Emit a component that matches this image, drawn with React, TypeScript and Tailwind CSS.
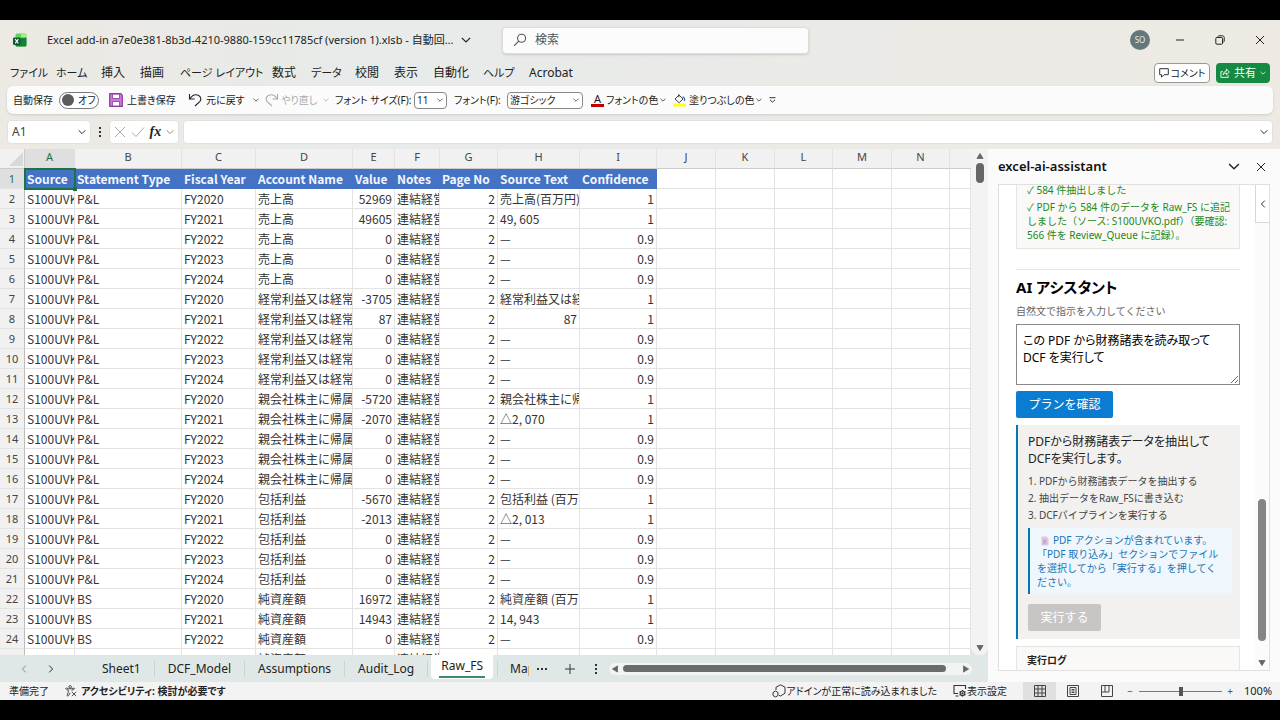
import React, { useState } from 'react';
import { clsx } from 'clsx';

type IconProps = { className?: string };

const ChevronDown: React.FC<IconProps> = ({ className }) => (
    <svg viewBox="0 0 10 6" fill="none" stroke="currentColor" strokeWidth="1.2" className={clsx('shrink-0', className)}>
        <path d="M0.8 0.8 5 5 9.2 0.8" />
    </svg>
);

const ExcelIcon: React.FC = () => (
    <svg viewBox="0 0 14 14" className="h-3.5 w-3.5 shrink-0">
        <rect x="2.5" y="0.5" width="11" height="13" rx="1.5" fill="#5fd35a" />
        <path d="M8 .5h4a1.5 1.5 0 0 1 1.5 1.5v2.800H8z" fill="#a5ee7b" />
        <path d="M8 4.800h5.500V12a1.500 1.500 0 0 1-1.500 1.500H4A1.500 1.500 0 0 1 2.500 12V9z" fill="#15803a" />
        <rect x="0" y="4.500" width="7.500" height="7.500" rx="1.200" fill="#0d5c2c" />
        <path d="m2.200 6.200 3.200 4.200M5.400 6.200l-3.200 4.200" stroke="#fff" strokeWidth="1.100" />
    </svg>
);

const SearchIcon: React.FC = () => (
    <svg viewBox="0 0 14 14" fill="none" stroke="#555" strokeWidth="1.1" className="h-3.5 w-3.5 shrink-0">
        <circle cx="8.6" cy="5.200" r="4" />
        <path d="M5.700 8.100 1 12.800" />
    </svg>
);

const SaveIcon: React.FC = () => (
    <svg viewBox="0 0 14 14" className="h-3.5 w-3.5 shrink-0">
        <path d="M.7.700h11.100l1.500 1.500v11.100H.7z" fill="#c77bd4" stroke="#8f3aa3" strokeWidth="1.200" />
        <path d="M3.500 1.200h7v4.300h-7z" fill="#fff" stroke="#8f3aa3" strokeWidth=".8" />
        <path d="M3.500 13V8.500h7V13z" fill="#fff" stroke="#8f3aa3" strokeWidth=".8" />
    </svg>
);

const UndoIcon: React.FC<IconProps> = ({ className }) => (
    <svg viewBox="0 0 14 14" fill="none" stroke="currentColor" strokeWidth="1.1" className={clsx('h-3.5 w-3.5 shrink-0', className)}>
        <path d="M1.500 1v5h5M1.700 5.800C4 2.500 7.500 1 10.300 2.300c3 1.500 3.200 4.500 1.200 6.500L7 13" />
    </svg>
);

const BucketIcon: React.FC = () => (
    <svg viewBox="0 0 14 14" fill="none" className="h-3.5 w-3.5 shrink-0">
        <rect x="0" y="10.500" width="13" height="3" fill="#ffff1a" />
        <path d="M5.800 1.200v3M2 6l4-4 4 4-3.800 3.800z" stroke="#444" strokeWidth="1" />
        <path d="M9.500 3.800c1.800.2 2.300 1.700 2 4.200" stroke="#2f6fb5" strokeWidth="1.300" />
    </svg>
);

const AccessibilityIcon: React.FC = () => (
    <svg viewBox="0 0 14 14" fill="none" stroke="#333" strokeWidth="1" className="h-3 w-3 shrink-0">
        <circle cx="6" cy="2.200" r="1.500" />
        <path d="M1 3.500c-.5 1 .2 1.400 1 1.700l1.800.6v2.500L2.500 12c0 1 1.300 1.300 1.700.3L6 9M11 3.500c.5 1-.2 1.400-1 1.700l-1.800.6v1M1.500 3.300 4 4.400h4l2.500-1.100M8 8l5 5M13 8l-5 5" />
    </svg>
);

const AddinIcon: React.FC = () => (
    <svg viewBox="0 0 14 14" fill="none" stroke="#333" strokeWidth="1" className="h-3.5 w-3.5 shrink-0">
        <path d="M4 6V3.200L8.500.8 13 3.200v6L8.500 12 7 11.300" />
        <path d="M1 8.500 3.500 7 6 8.500v3L3.500 13 1 11.500z" />
    </svg>
);

const DisplayIcon: React.FC = () => (
    <svg viewBox="0 0 14 14" fill="none" stroke="#333" strokeWidth="1.1" className="h-3.5 w-3.5 shrink-0">
        <path d="M5 9.500H1v-8h11.500V5M2.500 12h3" />
        <circle cx="9.500" cy="9.300" r="2.300" />
        <circle cx="9.500" cy="9.300" r=".6" />
        <path d="M9.500 6v1M9.500 11.600v1M6.500 7.700l.9.5M11.600 10.400l.9.500M6.500 10.900l.9-.5M11.600 8.200l.9-.5" />
    </svg>
);

const Triangle: React.FC<IconProps> = ({ className }) => (
    <svg viewBox="0 0 8 7" className={clsx('h-1.5 w-2 shrink-0', className)}>
        <path d="M4 .5 7.600 6.500H.4z" fill="#666" stroke="#666" strokeLinejoin="round" />
    </svg>
);

const menus = [
    { name: 'ファイル', className: 'w-[46px] text-[11px]' },
    { name: 'ホーム', className: 'w-[45px] text-[11px]' },
    { name: '挿入', className: 'w-[39px]' },
    { name: '描画', className: 'w-[40px]' },
    { name: 'ページ レイアウト', className: 'w-[92px] text-[11px]' },
    { name: '数式', className: 'w-[39px]' },
    { name: 'データ', className: 'w-[44px] text-[11px]' },
    { name: '校閲', className: 'w-[39px]' },
    { name: '表示', className: 'w-[39px]' },
    { name: '自動化', className: 'w-[50px]' },
    { name: 'ヘルプ', className: 'w-[46px] text-[11px]' },
    { name: 'Acrobat', className: 'w-[60px]' },
];

const columns = [
    { name: 'A', width: 'w-[50px]' },
    { name: 'B', width: 'w-[107px]' },
    { name: 'C', width: 'w-[74px]' },
    { name: 'D', width: 'w-[97px]' },
    { name: 'E', width: 'w-[42px]' },
    { name: 'F', width: 'w-[45px]' },
    { name: 'G', width: 'w-[58px]' },
    { name: 'H', width: 'w-[82px]' },
    { name: 'I', width: 'w-[77px]' },
    { name: 'J', width: 'w-[59px]' },
    { name: 'K', width: 'w-[59px]' },
    { name: 'L', width: 'w-[58px]' },
    { name: 'M', width: 'w-[59px]' },
    { name: 'N', width: 'w-[58px]' },
];

const headers = ['Source', 'Statement Type', 'Fiscal Year', 'Account Name', 'Value', 'Notes', 'Page No', 'Source Text', 'Confidence'];

const groups = [
    { type: 'P&L', account: '売上高', values: [52969, 49605, 0, 0, 0], texts: ['売上高(百万円)', '49, 605'] },
    { type: 'P&L', account: '経常利益又は経常', values: [-3705, 87, 0, 0, 0], texts: ['経常利益又は経', '87'] },
    { type: 'P&L', account: '親会社株主に帰属', values: [-5720, -2070, 0, 0, 0], texts: ['親会社株主に帰', '△2, 070'] },
    { type: 'P&L', account: '包括利益', values: [-5670, -2013, 0, 0, 0], texts: ['包括利益 (百万', '△2, 013'] },
    { type: 'BS', account: '純資産額', values: [16972, 14943, 0, 0], texts: ['純資産額 (百万', '14, 943'] },
];

const rows = groups.flatMap((g) =>
    g.values.map((value, i) => ({
        type: g.type,
        year: `FY${2020 + i}`,
        account: g.account,
        value,
        text: g.texts[i] ?? '—',
        confidence: value === 0 ? '0.9' : '1',
    }))
);

const sheets = ['Sheet1', 'DCF_Model', 'Assumptions', 'Audit_Log'];

const TitleBar: React.FC = () => (
    <header className="flex h-10 shrink-0 items-center">
        <div className="flex w-[502px] shrink-0 items-center pl-[13px]">
            <ExcelIcon />
            <span className="ml-5 whitespace-nowrap text-[11px]">
                Excel add-in a7e0e381-8b3d-4210-9880-159cc11785cf (version 1).xlsb - 自動回…
            </span>
            <button aria-label="ファイル情報" className="ml-2"><ChevronDown className="h-1.5 w-2.5" /></button>
        </div>
        <label className="flex h-[27px] w-[307px] items-center gap-2 rounded border border-[#dcdcdc] bg-[#fcfcfc] px-2.5 shadow-sm">
            <SearchIcon />
            <input type="text" placeholder="検索" aria-label="検索" className="min-w-0 flex-1 bg-transparent text-[12px] outline-none placeholder:text-[#555]" />
        </label>
        <div className="ml-auto flex items-center pr-[15px]">
            <button className="mr-[25px] h-5 w-5 rounded-full bg-[#64777a] text-[8px] text-[#e8eeee]">SO</button>
            <button aria-label="最小化" className="mr-[30px]">
                <svg viewBox="0 0 10 10" className="h-2.5 w-2.5"><path d="M1 5h8" stroke="#222" /></svg>
            </button>
            <button aria-label="元に戻す" className="mr-[30px]">
                <svg viewBox="0 0 10 10" fill="none" stroke="#222" className="h-2.5 w-2.5">
                    <rect x="0.800" y="2.500" width="6.700" height="6.700" rx="1" />
                    <path d="M2.800 1.500C3 1 3.500.8 4 .8h3.500C8.500.8 9.200 1.500 9.200 2.500V6c0 .600-.2 1-.7 1.200" />
                </svg>
            </button>
            <button aria-label="閉じる">
                <svg viewBox="0 0 10 10" stroke="#222" className="h-2.5 w-2.5"><path d="m1 1 8 8M9 1 1 9" /></svg>
            </button>
        </div>
    </header>
);

const MenuBar: React.FC = () => (
    <nav className="flex h-[26px] shrink-0 items-center px-2.5 text-[12px]">
        {menus.map((menu) => (
            <button key={menu.name} className={clsx('shrink-0 whitespace-nowrap text-left', menu.className)}>
                {menu.name}
            </button>
        ))}
        <div className="ml-auto flex gap-1.5">
            <button className="flex h-5 w-14 items-center justify-center gap-0.5 rounded border border-[#999] bg-white text-[10px] whitespace-nowrap">
                <svg viewBox="0 0 10 10" fill="none" stroke="#333" className="h-2.5 w-2.5 shrink-0"><path d="M.7.700h8.600v6H5L2.500 9.200V6.700H.7z" /></svg>
                コメント
            </button>
            <button className="flex h-5 w-[54px] items-center justify-center gap-1 rounded bg-[#158a43] text-[11px] text-white">
                <svg viewBox="0 0 11 11" fill="none" stroke="currentColor" className="h-2.5 w-2.5 shrink-0">
                    <path d="M3 4H1v6.300h8V8M3.500 7.500c.2-2.500 1.500-3.800 3.500-4V1.200l3.300 3.200L7 7.500V5.400C5.300 5.500 4.300 6.300 3.500 7.500z" />
                </svg>
                共有
                <ChevronDown className="h-1 w-1.5" />
            </button>
        </div>
    </nav>
);

const Toolbar: React.FC = () => {
    const [autoSave, setAutoSave] = useState(false);

    return (
        <div className="mx-[7px] flex h-7 shrink-0 items-center rounded-md bg-[#fbfbfb] pl-1.5 text-[10px] whitespace-nowrap shadow">
            <label className="flex w-24 shrink-0 items-center gap-1.5">
                自動保存
                <input type="checkbox" checked={autoSave} onChange={(e) => setAutoSave(e.target.checked)} className="sr-only" />
                <span className="flex h-[17px] w-10 items-center gap-1 rounded-full border border-[#777] bg-white px-0.5">
                    <span className="h-3 w-3 rounded-full bg-[#5c5c5c]" />
                    {autoSave ? 'オン' : 'オフ'}
                </span>
            </label>
            <button className="flex w-[79px] shrink-0 items-center gap-1"><SaveIcon />上書き保存</button>
            <button className="flex w-[77px] shrink-0 items-center gap-1">
                <UndoIcon />元に戻す<ChevronDown className="ml-1 h-1 w-1.5" />
            </button>
            <button disabled className="flex w-[70px] shrink-0 items-center gap-0.5 text-[#aaa]">
                <UndoIcon className="-scale-x-100" />やり直し<ChevronDown className="ml-1 h-1 w-1.5" />
            </button>
            <div className="flex w-[119px] shrink-0 items-center justify-between pr-[7px]">
                <label htmlFor="font-size">フォント サイズ(F):</label>
                <div className="relative flex items-center">
                    <select id="font-size" className="h-[17px] w-[33px] appearance-none rounded-sm border border-[#888] bg-white pl-0.5 text-[10px]">
                        <option>11</option>
                    </select>
                    <ChevronDown className="pointer-events-none absolute right-1 h-1 w-1.5" />
                </div>
            </div>
            <div className="flex w-[137px] shrink-0 items-center justify-between pr-2">
                <label htmlFor="font-name">フォント(F):</label>
                <div className="relative flex items-center">
                    <select id="font-name" className="h-[17px] w-[76px] appearance-none rounded-sm border border-[#888] bg-white pl-0.5 text-[10px]">
                        <option>游ゴシック</option>
                    </select>
                    <ChevronDown className="pointer-events-none absolute right-1 h-1 w-1.5" />
                </div>
            </div>
            <button className="flex w-[82px] shrink-0 items-center gap-0.5">
                <span className="w-[13px] border-b-3 border-[#c00000] text-[11px] leading-[11px]">A</span>
                フォントの色<ChevronDown className="h-1 w-1.5" />
            </button>
            <button className="flex w-24 shrink-0 items-center gap-0.5">
                <BucketIcon />塗りつぶしの色<ChevronDown className="h-1 w-1.5" />
            </button>
            <button aria-label="その他">
                <svg viewBox="0 0 7 6" fill="none" stroke="#333" className="h-1.5 w-[7px]"><path d="M.5.700h6M1 2.800l2.500 2.400L6 2.800" /></svg>
            </button>
        </div>
    );
};

const FormulaBar: React.FC = () => (
    <div className="mx-[7px] mt-1.5 mb-[5px] flex h-6 shrink-0 items-stretch">
        <div className="flex w-[84px] items-center rounded border border-[#e2e2e2] bg-white pr-1 pl-1">
            <input aria-label="名前ボックス" defaultValue="A1" className="min-w-0 flex-1 text-[12px] text-[#444] outline-none" />
            <ChevronDown className="h-1.5 w-2" />
        </div>
        <div className="flex w-[18px] flex-col items-center justify-center gap-0.5">
            <i className="h-0.5 w-0.5 bg-[#333]" /><i className="h-0.5 w-0.5 bg-[#333]" /><i className="h-0.5 w-0.5 bg-[#333]" />
        </div>
        <div className="flex w-[70px] items-center justify-between rounded border border-[#e2e2e2] bg-white px-1">
            <button aria-label="キャンセル"><svg viewBox="0 0 12 12" stroke="#aaa" className="h-3 w-3"><path d="m1 1 10 10M11 1 1 11" /></svg></button>
            <button aria-label="入力"><svg viewBox="0 0 14 12" fill="none" stroke="#aaa" className="h-3 w-3.5"><path d="m1 6.500 4 4L13 1.500" /></svg></button>
            <button className="font-['Liberation_Serif',serif] text-[14px] leading-4 font-bold italic">fx</button>
            <ChevronDown className="h-1.5 w-2 text-[#888]" />
        </div>
        <div className="ml-1 flex flex-1 items-center rounded border border-[#e2e2e2] bg-white pr-1">
            <input aria-label="数式バー" className="min-w-0 flex-1 px-2 text-[12px] outline-none" />
            <ChevronDown className="h-1.5 w-2" />
        </div>
    </div>
);

const cell = 'h-5 overflow-hidden border-r border-b border-[#e3e3e3] p-0 px-0.5 text-left text-clip';

const Sheet: React.FC = () => (
    <div className="min-w-0 flex-1 overflow-hidden bg-white">
        <table className="w-full table-fixed border-separate border-spacing-0 font-['Noto_Sans_CJK_JP',sans-serif] text-[12px] leading-[19px] whitespace-nowrap text-[#333] [font-feature-settings:normal]">
            <colgroup>
                <col className="w-[25px]" />
                {columns.map((c) => <col key={c.name} className={c.width} />)}
                <col />
            </colgroup>
            <thead>
                <tr className="bg-[#f1f1f1] font-['Noto_Sans',sans-serif] text-[11px] leading-[14px] text-[#444]">
                    <th aria-label="すべて選択" className="h-5 border-r border-b border-[#ccc] p-0">
                        <svg viewBox="0 0 14 14" className="ml-auto h-3.5 w-4"><path d="M14 0v14H0z" fill="#d9d9d9" /></svg>
                    </th>
                    {columns.map((c) => (
                        <th
                            key={c.name}
                            scope="col"
                            className={clsx(
                                'h-5 border-r border-b p-0 pb-1 font-normal',
                                c.name === 'A' ? 'border-r-[#ddd] border-b-[#1a7340] bg-[#dfdfdf] text-[#1a7340]' : 'border-r-[#e3e3e3] border-b-[#ccc]'
                            )}
                        >
                            {c.name}
                        </th>
                    ))}
                    <th className="border-b border-[#ccc]" />
                </tr>
            </thead>
            <tbody>
                <tr>
                    <RowNumber n={1} />
                    {headers.map((h, i) => (
                        <th
                            key={h}
                            scope="col"
                            className={clsx(
                                'h-5 bg-[#4472c4] p-0 px-0.5 text-left leading-4 font-bold text-[#f2f6ff]',
                                i === 0 && 'relative outline-2 -outline-offset-1 outline-[#1a7340]'
                            )}
                        >
                            {h}
                            {i === 0 && <span className="absolute -right-0.5 -bottom-0.5 h-1 w-1 bg-[#1a7340]" />}
                        </th>
                    ))}
                    <EmptyCells />
                </tr>
                {rows.map((row, i) => (
                    <tr key={i}>
                        <RowNumber n={i + 2} />
                        <td className={cell}>S100UVK</td>
                        <td className={cell}>{row.type}</td>
                        <td className={cell}>{row.year}</td>
                        <td className={cell}>{row.account}</td>
                        <td className={clsx(cell, 'text-right')}>{row.value}</td>
                        <td className={cell}>連結経営</td>
                        <td className={clsx(cell, 'text-right')}>2</td>
                        <td className={clsx(cell, row.text === '87' && 'text-right')}>{row.text}</td>
                        <td className={clsx(cell, 'text-right')}>{row.confidence}</td>
                        <EmptyCells />
                    </tr>
                ))}
            </tbody>
        </table>
    </div>
);

const RowNumber: React.FC<{ n: number }> = ({ n }) => (
    <th
        scope="row"
        className={clsx(
            "h-5 border-r border-b border-r-[#bbb] border-b-[#e3e3e3] p-0 text-center font-['Noto_Sans',sans-serif] text-[11px] leading-4 font-normal",
            n === 1 ? 'bg-[#dfdfdf] text-[#1a7340]' : 'bg-[#f1f1f1] text-[#444]'
        )}
    >
        {n}
    </th>
);

const EmptyCells: React.FC = () => (
    <>
        {['J', 'K', 'L', 'M', 'N', 'O'].map((c) => <td key={c} className={cell} />)}
    </>
);

const SheetTabs: React.FC = () => (
    <div className="flex h-[27px] shrink-0 items-center text-[12px]">
        <div className="flex w-[89px] shrink-0 gap-[19px] pl-5">
            <button aria-label="前のシート"><ChevronDown className="h-1.5 w-2 rotate-90 text-[#888]" /></button>
            <button aria-label="次のシート"><ChevronDown className="h-1.5 w-2 -rotate-90" /></button>
        </div>
        {sheets.map((s) => (
            <button key={s} className="h-4 shrink-0 border-r border-[#ccd4d3] px-[13px] leading-4">{s}</button>
        ))}
        <button className="ml-[3px] h-6 shrink-0 self-start rounded-b bg-white px-2">
            <span className="block border-b-2 border-[#3f8a6c] px-0.5 leading-5">Raw_FS</span>
        </button>
        <button className="ml-1 h-4 w-8 shrink-0 overflow-hidden border-l border-[#ccd4d3] pl-3 text-left leading-4">Map</button>
        <button aria-label="その他のシート" className="ml-1.5 flex shrink-0 gap-0.5 p-0.5">
            <i className="h-0.5 w-0.5 bg-[#333]" /><i className="h-0.5 w-0.5 bg-[#333]" /><i className="h-0.5 w-0.5 bg-[#333]" />
        </button>
        <button aria-label="シートの追加" className="ml-4 shrink-0">
            <svg viewBox="0 0 10 10" stroke="#333" className="h-2.5 w-2.5"><path d="M5 0v10M0 5h10" /></svg>
        </button>
        <div className="ml-5 flex shrink-0 flex-col gap-0.5">
            <i className="h-0.5 w-0.5 bg-[#333]" /><i className="h-0.5 w-0.5 bg-[#333]" /><i className="h-0.5 w-0.5 bg-[#333]" />
        </div>
        <div className="ml-3 flex h-3 flex-1 items-center gap-1 rounded-full bg-[#f1f4f3] pl-0.5">
            <Triangle className="-rotate-90" />
            <div className="h-[7px] flex-1 rounded-full bg-[#6b6b6b]" />
            <Triangle className="mr-0.5 ml-3 rotate-90" />
        </div>
        <div className="w-4 shrink-0" />
    </div>
);

const AssistantPane: React.FC = () => {
    const [prompt, setPrompt] = useState('この PDF から財務諸表を読み取って\nDCF を実行して');

    return (
        <aside className="flex w-[292px] shrink-0 flex-col bg-[#fbfbfb] pr-2.5 pb-[11px] pl-2.5">
            <div className="flex h-[35px] shrink-0 items-center pr-1">
                <h2 className="flex-1 text-[13px] font-semibold text-[#111]">excel-ai-assistant</h2>
                <button aria-label="オプション"><ChevronDown className="h-[7px] w-3" /></button>
                <button aria-label="閉じる" className="ml-4">
                    <svg viewBox="0 0 10 10" stroke="#222" className="h-2.5 w-2.5"><path d="m1 1 8 8M9 1 1 9" /></svg>
                </button>
            </div>
            <div className="relative flex min-h-0 flex-1 overflow-hidden border border-[#e0e0e0] bg-white pl-[17px]">
                <div className="flex w-56 shrink-0 flex-col items-start text-[10px] leading-[14px] whitespace-nowrap [font-feature-settings:normal] *:shrink-0">
                    <div className="w-full border border-t-0 border-[#e6e4e1] bg-[#faf9f8] px-2.5 pb-1.5 text-[#1b8a1b]">
                        <p className="-mt-0.5">✓ 584 件抽出しました</p>
                        <p className="mt-[3px]">
                            ✓ PDF から 584 件のデータを Raw_FS に追記<br />
                            しました（ソース: S100UVKO.pdf）（要確認:<br />
                            566 件を Review_Queue に記録）。
                        </p>
                    </div>
                    <hr className="mt-5 w-full border-[#e6e6e6]" />
                    <h3 className="mt-[7px] text-[15px] leading-5 font-bold text-black [font-feature-settings:'palt']">AI アシスタント</h3>
                    <label htmlFor="prompt" className="mt-[7px] text-[#666]">自然文で指示を入力してください</label>
                    <textarea
                        id="prompt"
                        value={prompt}
                        onChange={(e) => setPrompt(e.target.value)}
                        className="mt-1.5 block h-[61px] w-full border border-[#8a8886] bg-white px-1.5 py-[7px] text-[12px] leading-[17px] text-black [font-feature-settings:'palt']"
                    />
                    <button className="mt-1.5 h-[27px] w-[97px] rounded-xs bg-[#0a7cd2] text-[12px] text-white">プランを確認</button>
                    <section className="mt-[7px] flex w-full flex-col items-start border-l-2 border-[#0078b8] bg-[#f2f1ef] py-2 pr-2 pl-2.5">
                        <p className="text-[12px] leading-[17px] text-[#222] [font-feature-settings:'palt']">
                            PDFから財務諸表データを抽出して<br />
                            DCFを実行します。
                        </p>
                        <ol className="mt-1.5 leading-[17px] text-[#444]">
                            <li>1. PDFから財務諸表データを抽出する</li>
                            <li>2. 抽出データをRaw_FSに書き込む</li>
                            <li>3. DCFパイプラインを実行する</li>
                        </ol>
                        <div className="mt-1 w-full border-l-2 border-[#0078b8] bg-[#eff6fc] px-[7px] py-[5px] text-[#1478b8]">
                            <svg viewBox="0 0 8 10" className="mr-1 ml-1 inline h-2.5 w-2">
                                <path d="M.5.500h5l2 2v7h-7z" fill="#dcc8e4" />
                                <path d="M2 4h3.500M2 5.500h3.500M2 7h3.500" stroke="#a98fb8" strokeWidth=".7" />
                            </svg>
                            PDF アクションが含まれています。<br />
                            「PDF 取り込み」セクションでファイル<br />
                            を選択してから「実行する」を押してく<br />
                            ださい。
                        </div>
                        <button disabled className="mt-2.5 h-[27px] w-[73px] rounded-xs bg-[#c8c6c4] text-[12px] text-white">実行する</button>
                    </section>
                    <section className="mt-[7px] h-16 w-full border border-[#e6e4e1] bg-[#faf9f8] px-2.5 py-1.5">
                        <h4 className="text-[10px] font-bold text-[#222]">実行ログ</h4>
                    </section>
                </div>
                <button aria-label="ウィンドウを開く" className="absolute top-0 right-0 z-10 flex h-[38px] w-3.5 items-center justify-center border border-t-0 border-r-0 border-[#d8d8d8] bg-white">
                    <ChevronDown className="h-1.5 w-2 rotate-90" />
                </button>
                <div className="ml-auto flex w-3.5 flex-col items-center justify-end bg-[#fbfbfb] pb-1">
                    <div className="mb-[19px] h-[142px] w-2 rounded-full bg-[#858585]" />
                    <Triangle className="rotate-180" />
                </div>
            </div>
        </aside>
    );
};

const StatusBar: React.FC = () => (
    <footer className="flex h-[18px] shrink-0 items-center bg-[#f3f3f3] pr-2 pl-[9px] text-[10px] leading-4 whitespace-nowrap">
        <span>準備完了</span>
        <button className="ml-4 flex items-center gap-1 font-bold"><AccessibilityIcon />アクセシビリティ: 検討が必要です</button>
        <div className="ml-auto flex items-center">
            <button className="mr-4 flex items-center"><AddinIcon />アドインが正常に読み込まれました</button>
            <button className="mr-4 flex items-center"><DisplayIcon />表示設定</button>
            <button aria-label="標準" className="flex h-[18px] w-[33px] items-center justify-center bg-[#e0e0e0]">
                <svg viewBox="0 0 12 12" fill="none" stroke="#444" className="h-3 w-3"><path d="M.5.500h11v11H.5zM4 .5v11M8 .5v11M.5 4h11M.5 8h11" /></svg>
            </button>
            <button aria-label="ページ レイアウト" className="flex w-[34px] justify-center">
                <svg viewBox="0 0 12 12" fill="none" stroke="#444" className="h-3 w-3"><path d="M.5.500h11v11H.5zM3 2.500h6v7H3zM4.500 4.500h3M4.500 6h3M4.500 7.500h3" /></svg>
            </button>
            <button aria-label="改ページ プレビュー" className="flex w-[33px] justify-center">
                <svg viewBox="0 0 12 12" fill="none" stroke="#444" className="h-3 w-3"><path d="M.5.500h11v11H.5zM4 .5v6.500h4V.5M.5 7H4" /></svg>
            </button>
            <button aria-label="縮小" className="ml-0.5 w-2.5 text-[#555]">−</button>
            <input
                type="range"
                aria-label="ズーム"
                defaultValue={50}
                className="mx-1 h-px w-[83px] appearance-none bg-[#777] [&::-webkit-slider-thumb]:h-[9px] [&::-webkit-slider-thumb]:w-1 [&::-webkit-slider-thumb]:appearance-none [&::-webkit-slider-thumb]:bg-[#555]"
            />
            <button aria-label="拡大" className="w-2 text-[#555]">+</button>
            <span className="ml-2.5 w-7 text-right text-[11px]">100%</span>
        </div>
    </footer>
);

export default function App() {
    return (
        <div className="h-screen bg-black py-5">
            <main className="flex h-full flex-col overflow-hidden bg-linear-to-r from-[#ede9e3] via-[#e7ebea] via-30% to-[#eeeae3] font-['Noto_Sans','Noto_Sans_CJK_JP',sans-serif] text-[#222] [font-feature-settings:'palt']">
                <TitleBar />
                <MenuBar />
                <Toolbar />
                <FormulaBar />
                <div className="flex min-h-0 flex-1">
                    <div className="flex min-w-0 flex-1 flex-col bg-[#dfe8e6]">
                        <div className="flex min-h-0 flex-1">
                            <Sheet />
                            <div className="flex w-[17px] shrink-0 flex-col items-center rounded-b-lg bg-[#f3f3f3] py-1">
                                <Triangle />
                                <div className="mt-1 h-5 w-2 rounded-full bg-[#666]" />
                                <Triangle className="mt-auto rotate-180" />
                            </div>
                        </div>
                        <SheetTabs />
                    </div>
                    <AssistantPane />
                </div>
                <StatusBar />
            </main>
        </div>
    );
}
